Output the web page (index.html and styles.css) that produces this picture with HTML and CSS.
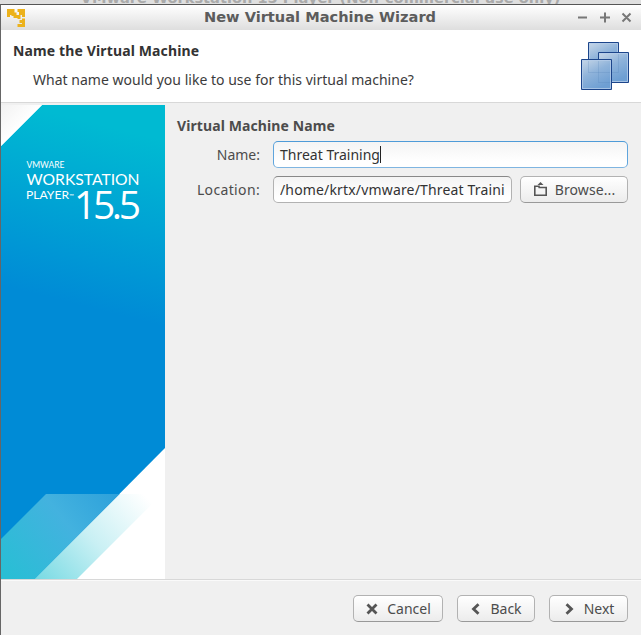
FILE: index.html
```html
<!DOCTYPE html>
<html lang="en">
<head>
<meta charset="utf-8">
<title>New Virtual Machine Wizard</title>
<link rel="stylesheet" href="styles.css">
</head>
<body>
<div class="parent-title"><span>VMware Workstation 15 Player (Non-commercial use only)</span></div>
<div class="window">
  <header class="titlebar">
    <svg class="app-icon" width="18" height="18" viewBox="0 0 18 18" fill="none" stroke="#ecb21c" stroke-width="3">
      <path d="M1.500 8V1.500H7.500M2 4.500h4V7M10.500 1.500h6V8M12 4.500h4M8 3.500v4h4V10M16.500 9.500v7H10.500M12.500 12.500h4"/>
    </svg>
    <h1>New Virtual Machine Wizard</h1>
    <svg class="controls" width="54" height="12" viewBox="0 0 54 12" fill="none" stroke="#777" stroke-width="2">
      <path d="M0 5.500h9M22 5.500h10M27 .5v10M44.500 1.500l8 8M52.500 1.500l-8 8"/>
    </svg>
  </header>
  <section class="heading">
    <div>
      <h2>Name the Virtual Machine</h2>
      <p>What name would you like to use for this virtual machine?</p>
    </div>
    <svg class="vm-icon" width="48" height="48" viewBox="0 0 48 48">
      <defs><linearGradient id="tile" x1="0" y1="0" x2=".5" y2="1"><stop offset="0" stop-color="#c9d8e8"/><stop offset=".5" stop-color="#8fb3da"/><stop offset="1" stop-color="#6e9fd3"/></linearGradient></defs>
      <g fill="url(#tile)" stroke="#1c458b">
        <path d="M7.500.5h30v30h-30z"/><path d="M17.500 10.500h30v30h-30z"/><path d="M.5 17.500h30v30H.5z"/>
      </g>
      <g fill="none" stroke="#b4cce8" stroke-opacity=".8"><path d="M8.500 17V1.500h28V10M31 39.500h15.500v-28h-28V17M1.500 18.500h28v28h-28z"/></g>
      <path d="M7.500 19v11.500H29M31 30.500h6.500V12M17.500 19v21.500H29" fill="none" stroke="#527fb5" stroke-opacity=".22"/>
    </svg>
  </section>
  <main class="content">
    <svg class="banner" width="164" height="474" viewBox="0 0 164 474">
      <defs>
        <linearGradient id="sky" gradientUnits="userSpaceOnUse" x1="118" y1="24" x2="74" y2="199"><stop stop-color="#00bad2"/><stop offset="1" stop-color="#008bd6"/></linearGradient>
        <linearGradient id="glass" gradientUnits="userSpaceOnUse" x1="10" y1="474" x2="132" y2="376"><stop stop-color="#29bed5"/><stop offset=".5" stop-color="#43b2df"/><stop offset="1" stop-color="#269bd9"/></linearGradient>
        <linearGradient id="pale" gradientUnits="userSpaceOnUse" x1="40" y1="480" x2="142" y2="388"><stop stop-color="#78dae3"/><stop offset=".5" stop-color="#c9f0f4"/><stop offset="1" stop-color="#fff"/></linearGradient>
        <linearGradient id="corner" x1="0" y1="0" x2=".5" y2=".5"><stop stop-color="#f2f2f2"/><stop offset="1" stop-color="#fff"/></linearGradient>
      </defs>
      <path fill="#fff" d="M0 0h164v474H0z"/>
      <path fill="url(#sky)" d="M41 0h123v343L34 474H0V41z"/>
      <path fill="url(#corner)" d="M0 0h41L0 41z"/>
      <path fill="url(#glass)" d="M45 389h74L34 474H0v-40z"/>
      <path fill="url(#pale)" d="M119 389h42l-85 85H34z"/>
      <g class="brand">
        <text x="25.500" y="63" font-size="8.500" textLength="38" lengthAdjust="spacingAndGlyphs">VMWARE</text>
        <text x="25.500" y="80" font-size="15.500" textLength="113" lengthAdjust="spacingAndGlyphs">WORKSTATION</text>
        <text x="25" y="94" font-size="11.500" textLength="43" lengthAdjust="spacingAndGlyphs">PLAYER</text>
        <text x="68" y="93" font-size="6">™</text>
        <text class="version" x="73" y="114" font-size="39" textLength="67" lengthAdjust="spacing">15.5</text>
      </g>
    </svg>
    <form class="form">
      <h3>Virtual Machine Name</h3>
      <div class="row">
        <label>Name:</label>
        <div class="field focused"><span>Threat Training</span><i class="caret"></i></div>
      </div>
      <div class="row">
        <label class="loc">Location:</label>
        <div class="field"><span class="clip">/home/krtx/vmware/Threat Training</span></div>
        <button class="btn browse" type="button">
          <svg width="13" height="14" viewBox="0 0 13 14" fill="none" stroke="#555" stroke-width="1.600"><path d="M5 5.500V4.200H.8v9h11.400V5.500H4.500"/><path d="M3.500 3L6.500 0l3 3z" fill="#555" stroke="none"/></svg>
          <span>Browse...</span>
        </button>
      </div>
    </form>
  </main>
  <footer class="actions">
    <button class="btn cancel" type="button"><svg width="12" height="12" viewBox="0 0 12 12"><path d="M1.500 1.500l9 9M10.500 1.500l-9 9"/></svg><span>Cancel</span></button>
    <button class="btn back" type="button"><svg width="9" height="12" viewBox="0 0 9 12"><path d="M7.500 1.200L2.500 6l5 4.800"/></svg><span>Back</span></button>
    <button class="btn next" type="button"><svg width="9" height="12" viewBox="0 0 9 12"><path d="M1.500 1.200L6.500 6l-5 4.800"/></svg><span>Next</span></button>
  </footer>
</div>
</body>
</html>
```
FILE: styles.css
```css
* { box-sizing: border-box; }
body { margin: 0; width: 641px; height: 635px; overflow: hidden; background: #f0f0f0; color: #3c3c3c; font: 14px/20px "Noto Sans", "Open Sans", sans-serif; display: flex; flex-direction: column; }
h1, h2, h3, p { margin: 0; }
svg { display: block; flex: none; }
.parent-title { height: 4px; flex: none; background: #dfdfdf; overflow: hidden; display: flex; align-items: flex-end; justify-content: center; color: #aaa; font: bold 14.600px/14px "DejaVu Sans", sans-serif; white-space: nowrap; }
.parent-title span { margin-bottom: -1px; }
.window { flex: 1; min-height: 0; display: flex; flex-direction: column; border-top: 1px solid #555; border-left: 1px solid #666; }
.titlebar { height: 25px; flex: none; display: flex; align-items: center; padding: 0 9px 0 6px; background: linear-gradient(#fff, #dedede); }
.titlebar h1 { flex: 1; text-align: center; color: #5c5c5c; font: bold 14.600px/24px "DejaVu Sans", sans-serif; padding: 0 0 2px 37px; }
.heading { height: 72px; flex: none; display: flex; justify-content: space-between; align-items: flex-start; background: #fff; padding: 12px 12px 0; }
.heading h2 { font-size: 14px; line-height: 18px; color: #333; letter-spacing: .13px; }
.heading p { margin: 10px 0 0 20px; line-height: 20px; color: #3c3c3c; letter-spacing: .02px; }
.content { height: 477px; flex: none; display: flex; border-top: 1px solid #d8d8d8; }
.banner { margin-top: 2px; }
.brand { fill: #fff; font-family: Lato, sans-serif; }
.version { font-family: "Open Sans", sans-serif; font-weight: 400; }
.form { flex: 1; min-width: 0; padding: 13px 13px 0 12px; }
.form h3 { font-size: 14px; line-height: 20px; color: #4c4c4c; letter-spacing: .1px; }
.row { display: flex; height: 27px; margin-top: 5px; }
.row + .row { margin-top: 8px; }
.row label { width: 96px; flex: none; padding-right: 13px; text-align: right; line-height: 27px; color: #4c4c4c; white-space: nowrap; }
.row .loc { letter-spacing: .35px; }
.field { flex: 1; display: flex; align-items: center; min-width: 0; border: 1px solid #b2b2b2; border-top-color: #888; border-radius: 5px; padding: 0 6px; background: linear-gradient(#f4f4f4, #fff 80%); color: #333; white-space: nowrap; }
.field.focused { border-color: #4e9bd8 #5fa5dd #7fb5e1; }
.caret { width: 1px; height: 17px; background: #222; }
.clip { overflow: hidden; flex: 1; min-width: 0; letter-spacing: .16px; }
.btn { display: flex; flex: none; align-items: center; justify-content: center; height: 27px; border: 1px solid #b2b2b2; border-bottom-color: #999; border-radius: 5px; padding: 0; background: linear-gradient(#fff, #ececec); color: #4c4c4c; font: inherit; white-space: nowrap; box-shadow: inset 0 1px #fff; }
.browse { width: 108px; margin-left: 8px; gap: 8px; letter-spacing: .1px; padding-left: 1px; }
.browse svg { margin-top: -2px; }
.actions { flex: 1; display: flex; justify-content: flex-end; align-items: flex-start; padding: 15px 13px 0 0; border-top: 1px solid #d8d8d8; box-shadow: inset 0 1px #fafafa; }
.actions .btn svg { fill: none; stroke: #555; stroke-width: 2.800; }
.cancel { width: 90px; gap: 9px; padding-left: 1px; }
.back { width: 78px; gap: 10px; margin-left: 14px; padding-left: 1px; }
.next { width: 79px; gap: 10px; margin-left: 14px; padding-left: 2px; }
```
